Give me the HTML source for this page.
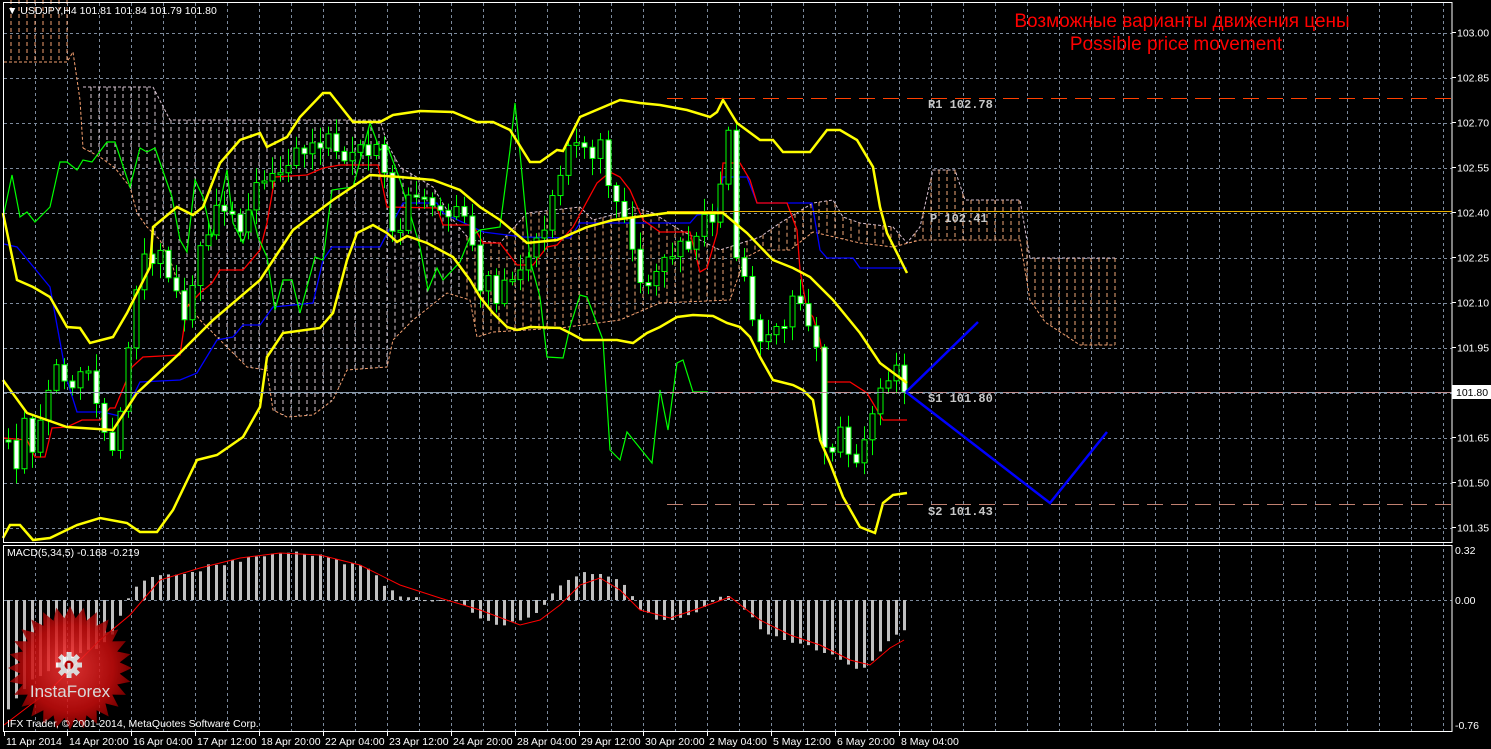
<!DOCTYPE html>
<html><head><meta charset="utf-8"><style>
html,body{margin:0;padding:0;background:#000;}
body{width:1491px;height:749px;overflow:hidden;position:relative;font-family:"Liberation Sans",sans-serif;}
svg{position:absolute;left:0;top:0;}
</style></head><body>
<svg id="s" width="1491" height="749" viewBox="0 0 1491 749" xmlns="http://www.w3.org/2000/svg">
<defs>
<radialGradient id="rg" cx="50%" cy="50%" r="50%">
<stop offset="0" stop-color="#ff3a3a"/><stop offset="0.7" stop-color="#c80c0c"/><stop offset="1" stop-color="#8a0000"/>
</radialGradient>
</defs>
<rect width="1491" height="749" fill="#000"/>
<g id="grid"></g>
<g id="cloud"></g>
<g id="lines"></g>
<g id="candles"></g>
<g id="bands"></g>
<g id="macd"></g>
<line x1="667" y1="98.5" x2="1452" y2="98.5" stroke="#ff4000" stroke-dasharray="16,8" stroke-width="1"/>
<line x1="667" y1="211.5" x2="1452" y2="211.5" stroke="#e8b000" stroke-width="1"/>
<line x1="4" y1="392.5" x2="1452" y2="392.5" stroke="#8a9aaa" stroke-width="1"/>
<line x1="667" y1="392.5" x2="1452" y2="392.5" stroke="#c09090" stroke-dasharray="16,8" stroke-width="1"/>
<line x1="667" y1="504.5" x2="1452" y2="504.5" stroke="#c08070" stroke-dasharray="16,8" stroke-width="1"/>
<g font-family="Liberation Mono, monospace" font-weight="bold" font-size="12" fill="#c8c8c8">
<text x="928" y="108">R1 102.78</text>
<text x="930" y="222">P 102.41</text>
<text x="928" y="402">S1 101.80</text>
<text x="928" y="515">S2 101.43</text>
</g>
<polyline points="906,392 978,322" fill="none" stroke="#0000ff" stroke-width="2.5"/>
<polyline points="906,392 1050,503 1107,432" fill="none" stroke="#0000ff" stroke-width="2.5"/>
<g font-family="Liberation Sans, sans-serif" font-size="19" fill="#ff0000" text-anchor="middle">
<text x="1182" y="27">Возможные варианты движения цены</text>
<text x="1176" y="50">Possible price movement</text>
</g>
<rect x="3.5" y="2.5" width="1448.5" height="540" fill="none" stroke="#fff" stroke-width="1"/>
<rect x="3.5" y="545.5" width="1448.5" height="186" fill="none" stroke="#fff" stroke-width="1"/>
<g font-family="Liberation Sans, sans-serif" font-size="10.5" fill="#fff" id="axis"></g>
<rect x="1452" y="385" width="39" height="14" fill="#fff"/>
<text x="1456" y="396" font-size="10.5" fill="#000" font-family="Liberation Sans, sans-serif">101.80</text>
<text x="7" y="14" font-size="10.5" fill="#fff" font-family="Liberation Sans, sans-serif">▼ USDJPY,H4  101.81 101.84 101.79 101.80</text>
<text x="7" y="556" font-size="10.5" fill="#fff" font-family="Liberation Sans, sans-serif">MACD(5,34,5) -0.168 -0.219</text>
<g opacity="0.85">
<polygon id="star" fill="url(#rg)"/>
<g fill="#fff" transform="translate(69,665)">
<circle r="9"/>
<g id="teeth"></g>
<circle r="4.5" fill="#c00"/>
<rect x="-1.5" y="-2" width="3" height="12" fill="#fff"/>
</g>
<text x="70" y="697" font-family="Liberation Sans, sans-serif" font-size="17" fill="#fff" text-anchor="middle">InstaForex</text>
</g>
<text x="7" y="727" font-size="10.5" fill="#fff" font-family="Liberation Sans, sans-serif">IFX Trader, © 2001-2014, MetaQuotes Software Corp.</text>
</svg>
<script>
(function(){
var NS="http://www.w3.org/2000/svg";
function el(p,t,a){var e=document.createElementNS(NS,t);for(var k in a)e.setAttribute(k,a[k]);document.getElementById(p).appendChild(e);return e;}
function ip(P,x){if(x<=P[0][0])return P[0][1];for(var i=1;i<P.length;i++){if(x<=P[i][0]){var a=P[i-1],b=P[i];return a[1]+(b[1]-a[1])*(x-a[0])/(b[0]-a[0]);}}return P[P.length-1][1];}
function pl(p,P,c,w,extra){var a={points:P.map(function(q){return q.join(",")}).join(" "),fill:"none",stroke:c,"stroke-width":w};if(extra)for(var k in extra)a[k]=extra[k];return el(p,"polyline",a);}
for(var x=35;x<=1443;x+=32)el("grid","line",{x1:x+.5,y1:3,x2:x+.5,y2:731,stroke:"#7c8a9c","stroke-dasharray":"3,3"});
for(var k=0;k<12;k++){var y=Math.round(32.5+45*k)+.5;el("grid","line",{x1:4,y1:y,x2:1452,y2:y,stroke:"#7c8a9c","stroke-dasharray":"3,3"});}
el("grid","line",{x1:4,y1:600.5,x2:1452,y2:600.5,stroke:"#7c8a9c","stroke-dasharray":"3,3"});
var pr=["103.00","102.85","102.70","102.55","102.40","102.25","102.10","101.95","101.80","101.65","101.50","101.35"];
for(var k=0;k<12;k++){var y=32.5+45*k;if(k!=8){var t=el("axis","text",{x:1457,y:y+4});t.textContent=pr[k];}el("axis","line",{x1:1452,y1:y,x2:1456,y2:y,stroke:"#fff"});}
[["0.32",554],["0.00",604],["-0.76",729]].forEach(function(a){var t=el("axis","text",{x:1455,y:a[1]});t.textContent=a[0];});
var dl=["11 Apr 2014","14 Apr 20:00","16 Apr 04:00","17 Apr 12:00","18 Apr 20:00","22 Apr 04:00","23 Apr 12:00","24 Apr 20:00","28 Apr 04:00","29 Apr 12:00","30 Apr 20:00","2 May 04:00","5 May 12:00","6 May 20:00","8 May 04:00"];
dl.forEach(function(s,i){var x=i==0?4:3+64*i;el("axis","line",{x1:x+.5,y1:731,x2:x+.5,y2:736,stroke:"#fff"});var t=el("axis","text",{x:x+2,y:745});t.textContent=s;});
var T=[[83,87],[153,87],[170,120],[380,120],[387,143],[400,167],[433,187],[453,220],[470,240],[500,243],[527,213],[580,207],[593,220],[620,213],[633,207],[653,213],[680,230],[720,250],[760,237],[780,223],[813,203],[833,200],[843,217],[860,223],[893,227],[907,243],[920,227],[933,170],[955,170],[965,200],[1020,200],[1030,258],[1115,258]];
var B=[[83,148],[100,157],[115,168],[130,187],[137,213],[147,227],[160,240],[173,267],[180,293],[200,320],[220,340],[247,367],[267,370],[273,410],[287,417],[313,415],[333,400],[347,370],[387,367],[393,340],[413,320],[447,293],[470,300],[477,337],[493,332],[560,328],[620,320],[660,303],[730,300],[745,258],[760,250],[790,250],[813,232],[860,243],[893,247],[920,240],[935,240],[1020,240],[1030,300],[1045,322],[1080,345],[1115,345]];
pl("cloud",[[4,62],[67,62],[73,52],[80,100],[83,148]],"#f4a070",1,{"stroke-dasharray":"3,2"});
for(var x=11;x<=67;x+=8)el("cloud","line",{x1:x,y1:0,x2:x,y2:62,stroke:"#f4a070","stroke-dasharray":"4,3"});
pl("cloud",T,"#d8c0d0",1,{"stroke-dasharray":"3,2"});
pl("cloud",B,"#f4a070",1,{"stroke-dasharray":"3,2"});
for(var x=91;x<=1115;x+=8){var a=ip(T,x),b=ip(B,x);el("cloud","line",{x1:x,y1:Math.min(a,b),x2:x,y2:Math.max(a,b),stroke:x<460?"#d8c8d0":"#f0a878","stroke-dasharray":"4,3","stroke-width":1});}
pl("lines",[[4,244],[17,247],[50,287],[67,380],[77,412],[103,412],[123,417],[140,382],[180,380],[197,373],[217,340],[233,337],[243,325],[260,325],[273,307],[313,303],[323,260],[332,247],[380,247],[403,203],[437,203],[443,213],[483,232],[523,237],[570,238],[580,223],[690,223],[697,215],[717,213],[723,177],[747,177],[757,203],[812,203],[820,250],[827,258],[853,258],[860,268],[907,268]],"#0000ff",1.3);
pl("lines",[[4,438],[27,440],[35,457],[45,457],[52,428],[67,427],[82,420],[100,420],[110,408],[115,408],[132,367],[143,357],[180,355],[187,307],[200,293],[212,283],[220,270],[243,270],[260,250],[267,223],[275,177],[307,175],[323,168],[340,165],[378,165],[387,207],[437,208],[443,225],[473,225],[483,243],[500,243],[517,265],[533,265],[547,247],[557,245],[573,227],[597,183],[610,172],[620,177],[630,190],[643,220],[660,232],[690,232],[700,272],[707,268],[717,233],[723,163],[740,163],[750,180],[757,203],[787,203],[797,230],[800,270],[807,310],[813,317],[820,340],[827,382],[850,382],[867,393],[883,420],[907,420]],"#ff0000",1.3);
pl("lines",[[4,213],[12,175],[20,217],[27,212],[35,222],[50,207],[60,162],[67,162],[77,170],[83,160],[92,162],[107,142],[115,142],[130,187],[140,148],[147,152],[155,148],[172,197],[180,240],[187,252],[195,180],[203,197],[212,237],[218,213],[227,170],[233,223],[243,243],[252,212],[258,237],[267,257],[275,310],[283,280],[292,280],[300,313],[315,257],[323,260],[332,190],[353,187],[370,123],[380,150],[387,145],[400,180],[410,213],[420,247],[428,290],[437,268],[443,280],[460,262],[470,237],[480,230],[500,227],[510,150],[515,103],[520,153],[530,260],[540,297],[547,357],[563,358],[570,327],[580,295],[587,297],[603,340],[610,450],[620,460],[627,432],[652,463],[660,390],[668,430],[677,363],[683,360],[693,392],[708,392]],"#00ff00",1.2);
var path=[[8,440],[16,470],[24,420],[32,460],[40,430],[50,380],[60,370],[70,390],[80,360],[90,380],[100,400],[108,470],[116,420],[124,380],[132,320],[140,240],[150,250],[160,260],[172,270],[180,320],[190,300],[200,240],[210,220],[220,200],[230,210],[240,220],[250,200],[260,190],[270,160],[280,170],[290,160],[300,150],[310,150],[320,140],[330,140],[340,175],[350,160],[360,150],[370,160],[380,150],[390,230],[400,240],[410,180],[420,190],[430,220],[440,200],[450,220],[460,210],[470,240],[480,300],[490,280],[500,300],[510,270],[520,280],[530,260],[540,240],[550,190],[560,180],[570,150],[580,130],[590,160],[600,150],[610,190],[620,190],[630,240],[640,290],[650,270],[660,260],[670,250],[680,230],[690,240],[700,230],[710,220],[718,200],[726,100],[734,240],[742,280],[750,300],[760,350],[770,320],[780,350],[790,300],[800,300],[808,330],[816,340],[824,450],[832,460],[840,430],[848,460],[856,460],[864,440],[872,410],[880,380],[888,390],[896,370],[904,390]];
function rnd(i){var v=Math.sin(i*12.9898+3.1)*43758.5453;return v-Math.floor(v);}
var prev=440;
for(var i=0;i<=112;i++){var x=8+8*i;var c=ip(path,x)+(rnd(i)-.5)*24;if(i==112)c=392;var o=prev;prev=c;
var bt=Math.min(o,c),bb=Math.max(o,c);if(bb-bt<2){bb=bt+2;}
var hi=bt-3-rnd(i+50)*14,lo=bb+3+rnd(i+90)*14;if(x==726)hi=30;
el("candles","line",{x1:x+.5,y1:hi,x2:x+.5,y2:lo,stroke:"#00ff00","stroke-width":1});
el("candles","rect",{x:x-2,y:bt,width:5,height:bb-bt,fill:c<o?"#000":"#fff",stroke:"#00ff00","stroke-width":1});}
pl("bands",[[3,213],[17,280],[33,287],[50,297],[67,327],[80,328],[90,343],[113,337],[127,313],[150,267],[153,227],[177,207],[193,215],[203,207],[220,163],[240,140],[260,133],[267,147],[287,137],[300,117],[323,93],[330,93],[353,122],[380,122],[393,115],[420,111],[453,112],[477,122],[493,122],[510,130],[530,162],[540,162],[557,150],[563,151],[580,117],[620,100],[640,103],[660,105],[687,110],[710,117],[717,112],[723,100],[737,123],[760,140],[773,140],[783,152],[810,152],[827,130],[840,130],[857,140],[873,167],[880,207],[887,233],[907,273]],"#ffff00",2.5);
pl("bands",[[3,380],[27,413],[67,427],[113,430],[137,393],[180,353],[213,320],[260,280],[293,230],[333,200],[370,175],[400,177],[433,180],[460,190],[480,207],[500,220],[527,243],[557,240],[587,227],[613,220],[667,213],[723,213],[747,233],[773,260],[793,268],[810,277],[833,300],[860,333],[880,363],[907,383]],"#ffff00",2.5);
pl("bands",[[3,538],[10,525],[20,525],[33,540],[50,538],[77,525],[100,518],[127,523],[140,532],[157,532],[173,510],[197,460],[217,455],[243,437],[260,407],[267,357],[283,333],[320,328],[333,313],[347,260],[357,233],[373,225],[387,233],[397,242],[407,236],[427,243],[453,257],[470,280],[480,297],[493,313],[507,327],[517,330],[530,327],[560,328],[570,333],[583,340],[617,340],[633,343],[647,333],[660,327],[677,317],[693,315],[713,316],[727,323],[740,327],[750,337],[760,357],[773,380],[793,385],[803,390],[813,400],[820,440],[830,463],[843,497],[860,527],[875,533],[883,503],[893,495],[907,493]],"#ffff00",2.5);
var H=[[8,-110],[16,-100],[24,-90],[32,-80],[40,-75],[60,-65],[80,-55],[100,-45],[112,-35],[120,-15],[128,0],[136,15],[150,25],[170,25],[190,25],[200,30],[210,35],[220,35],[240,40],[260,45],[280,45],[300,47],[320,45],[340,38],[360,33],[370,30],[380,20],[390,10],[400,5],[420,0],[440,-2],[460,-3],[480,-20],[500,-25],[520,-20],[540,-10],[560,15],[575,25],[590,28],[600,25],[615,20],[625,15],[640,-10],[660,-20],[680,-18],[700,-10],[710,-5],[720,5],[730,3],[740,-5],[750,-15],[760,-30],[780,-40],[800,-45],[820,-50],[840,-60],[856,-70],[864,-68],[880,-50],[896,-35],[904,-30]];
for(var x=8;x<=904;x+=8){var h=ip(H,x)+(rnd(x)-.5)*4;el("macd","rect",{x:x-1,y:h>0?600-h:600,width:3,height:Math.max(1,Math.abs(h)),fill:"#c0c0c0"});}
pl("macd",[[4,725],[50,690],[100,640],[130,615],[160,580],[200,568],[240,558],[280,553],[320,555],[360,565],[400,585],[440,598],[480,610],[520,625],[540,620],[560,605],[580,585],[600,578],[620,590],[640,610],[670,618],[700,608],[730,597],[760,620],[790,635],[820,645],[850,660],[870,665],[890,648],[904,640]],"#ff0000",1);
var pts=[];for(var i=0;i<56;i++){var r=i%2?50:62;var a=i*Math.PI/28;pts.push((70+r*Math.cos(a)).toFixed(1)+","+(668+r*Math.sin(a)).toFixed(1));}
document.getElementById("star").setAttribute("points",pts.join(" "));
for(var i=0;i<8;i++){el("teeth","rect",{x:-2.5,y:-13,width:5,height:6,transform:"rotate("+(i*45)+")"});}
})();
</script>
</body></html>
